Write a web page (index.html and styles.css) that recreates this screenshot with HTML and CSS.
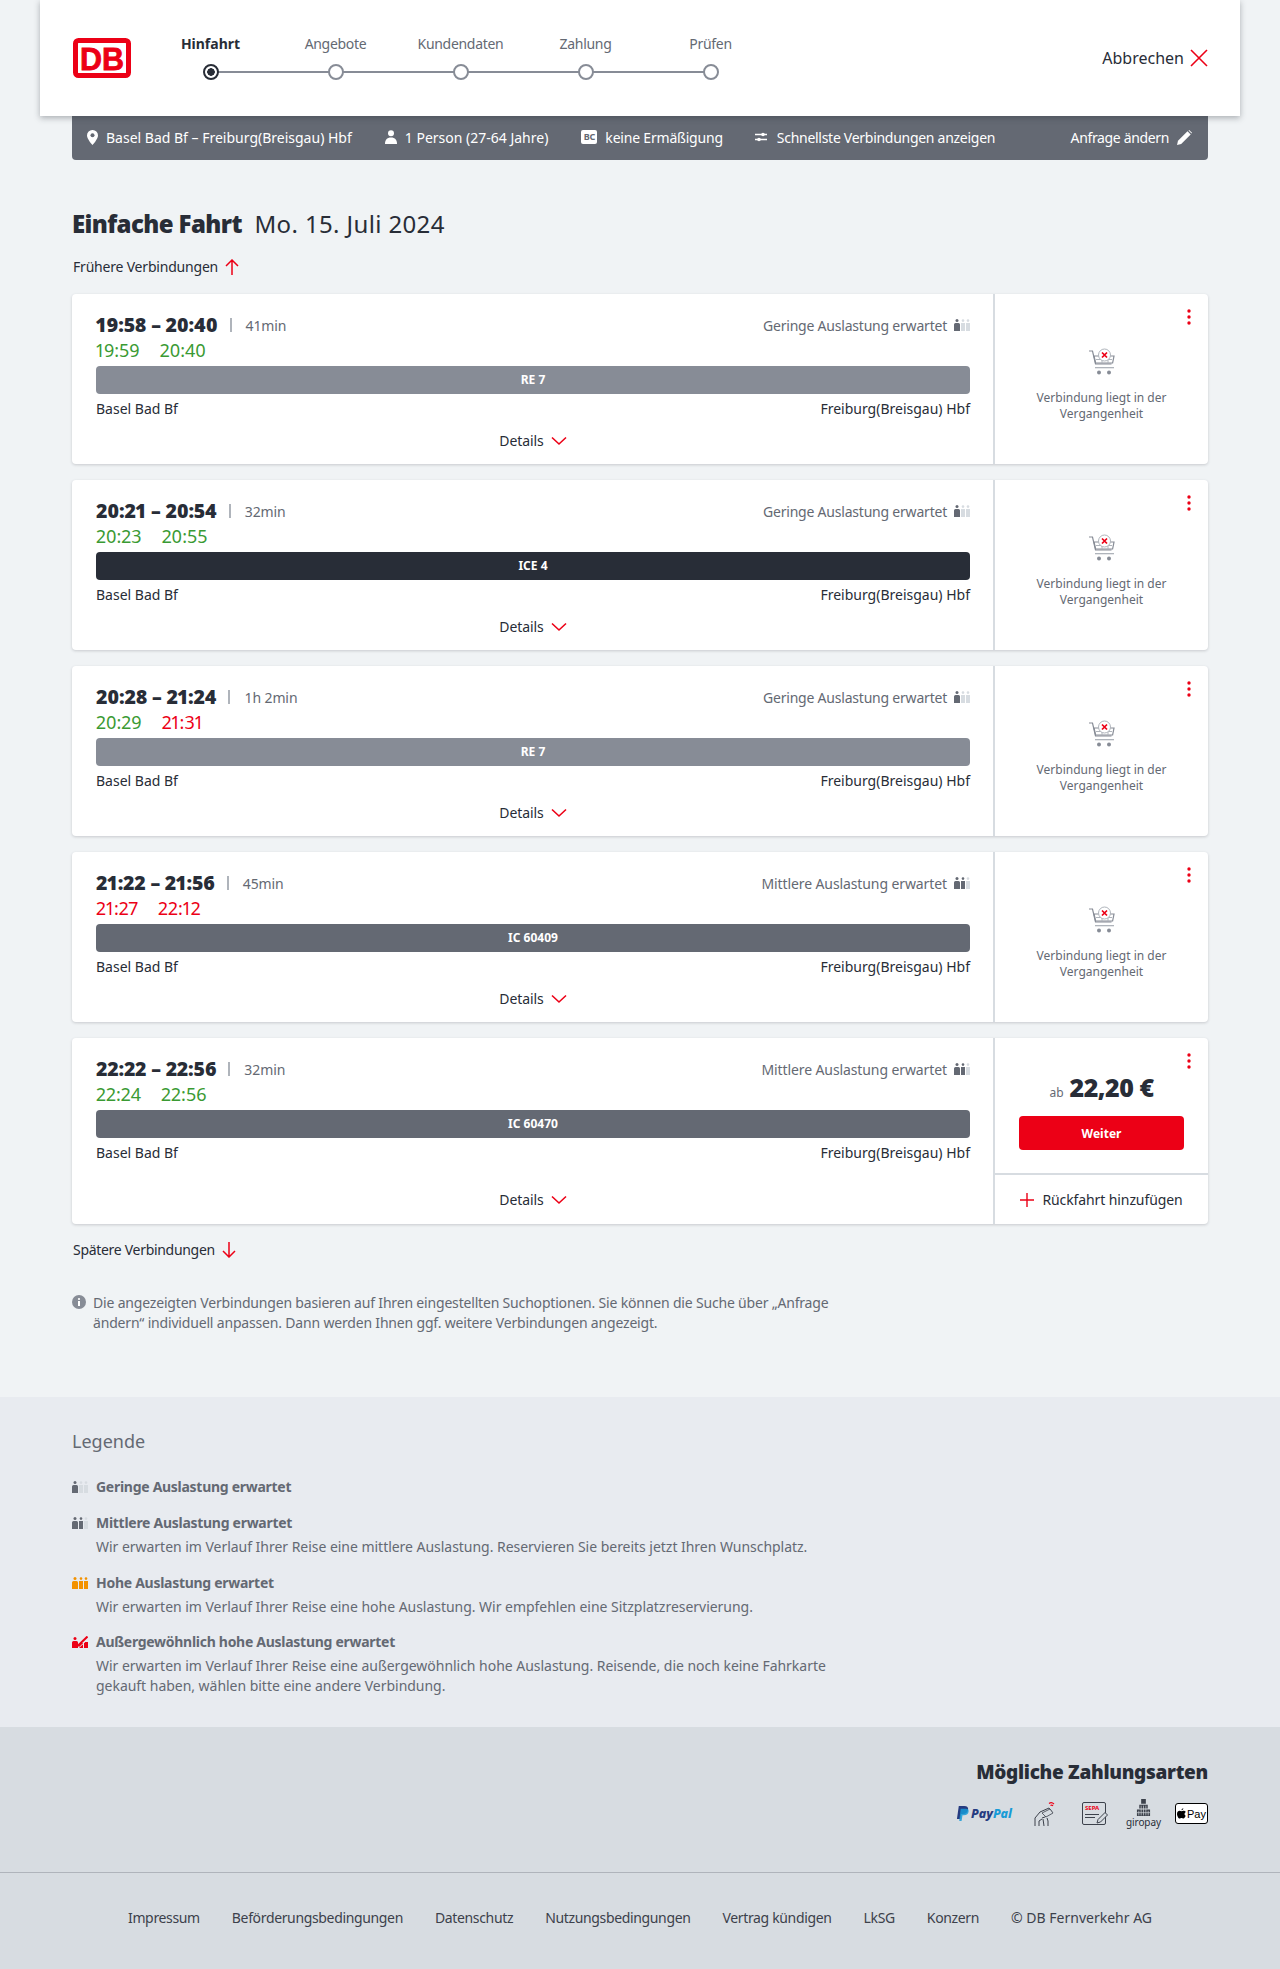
FILE: index.html
```html
<!DOCTYPE html>
<html lang="de">
<head>
    <meta charset="UTF-8">
    <meta name="viewport" content="width=device-width, initial-scale=1.0">
    <title>Angebotsauswahl</title>
    <link rel="stylesheet" href="styles.css">
</head>
<body>
    <!-- Shared icons -->
    <svg class="icon-defs" aria-hidden="true">
        <symbol id="i-chevron" viewBox="0 0 16 10"><path d="M1 1.500l7 6.500 7-6.500" fill="none" stroke="#ec0016" stroke-width="1.600"/></symbol>
        <symbol id="i-dots" viewBox="0 0 4 16"><circle cx="2" cy="2" r="1.700" fill="#ec0016"/><circle cx="2" cy="8" r="1.700" fill="#ec0016"/><circle cx="2" cy="14" r="1.700" fill="#ec0016"/></symbol>
        <symbol id="i-load-low" viewBox="0 0 16 12"><circle cx="3" cy="1.600" r="1.500" fill="#646973"/><path d="M0 5.500a1.500 1.500 0 0 1 1.500-1.500h3A1.500 1.500 0 0 1 6 5.500V12H0z" fill="#646973"/><circle cx="9" cy="1.600" r="1.300" fill="#d7dce1"/><rect x="7" y="4" width="4" height="8" fill="#d7dce1"/><circle cx="14" cy="1.600" r="1.300" fill="#d7dce1"/><rect x="12" y="4" width="4" height="8" fill="#d7dce1"/></symbol>
        <symbol id="i-load-mid" viewBox="0 0 16 12"><circle cx="3" cy="1.600" r="1.500" fill="#646973"/><path d="M0 5.500a1.500 1.500 0 0 1 1.500-1.500h3A1.500 1.500 0 0 1 6 5.500V12H0z" fill="#646973"/><circle cx="9" cy="1.600" r="1.300" fill="#646973"/><rect x="7" y="4" width="4" height="8" fill="#646973"/><circle cx="14" cy="1.600" r="1.300" fill="#d7dce1"/><rect x="12" y="4" width="4" height="8" fill="#d7dce1"/></symbol>
        <symbol id="i-load-high" viewBox="0 0 16 12"><g fill="#f39200"><circle cx="3" cy="1.600" r="1.500"/><path d="M0 5.500a1.500 1.500 0 0 1 1.500-1.500h3A1.500 1.500 0 0 1 6 5.500V12H0z"/><circle cx="9" cy="1.600" r="1.300"/><rect x="7" y="4" width="4" height="8"/><circle cx="14" cy="1.600" r="1.300"/><rect x="12" y="4" width="4" height="8"/></g></symbol>
        <symbol id="i-load-max" viewBox="0 0 16 12"><g fill="#ec0016"><circle cx="3" cy="2.600" r="1.500"/><path d="M0 6.500a1.500 1.500 0 0 1 1.500-1.500h3A1.500 1.500 0 0 1 6 6.500V12H0z"/><rect x="7" y="7" width="4" height="5"/><rect x="12" y="6" width="4" height="6"/></g><path d="M3 12.500L15.500 0.500" stroke="#ec0016" stroke-width="2"/><path d="M6.500 12L16 3" stroke="#e8ebf0" stroke-width="1"/></symbol>
        <symbol id="i-cart" viewBox="0 0 28 28">
            <path d="M1 3h3.500l3 13h16" fill="none" stroke="#878c96" stroke-width="1.200"/>
            <path d="M6 8h20l-1.400 7H7.600z" fill="none" stroke="#878c96" stroke-width="1.200"/>
            <path d="M8 11.500h16M14 8v7M20 8v7" stroke="#afb4bb" stroke-width="1"/>
            <rect x="7" y="19" width="19" height="1.300" fill="#afb4bb"/>
            <circle cx="11" cy="24.500" r="2" fill="#878c96"/><circle cx="21" cy="24.500" r="2" fill="#878c96"/>
            <circle cx="16.500" cy="7" r="6" fill="#fff" stroke="#afb4bb" stroke-width="1"/>
            <path d="M14 4.500l5 5M19 4.500l-5 5" stroke="#ec0016" stroke-width="1.700"/>
        </symbol>
    </svg>

    <header class="top-header">
        <svg class="db-logo" viewBox="0 0 58 40" role="img" aria-label="DB">
            <rect x="2.500" y="2.500" width="53" height="35" rx="3" fill="#fff" stroke="#ec0016" stroke-width="5"/>
            <text x="7" y="31.500" font-size="32" textLength="44" lengthAdjust="spacingAndGlyphs" class="db-logo-text">DB</text>
        </svg>
        <ol class="stepper">
            <li class="step step-active"><span class="step-label">Hinfahrt</span><span class="step-dot"></span></li>
            <li class="step"><span class="step-label">Angebote</span><span class="step-dot"></span></li>
            <li class="step"><span class="step-label">Kundendaten</span><span class="step-dot"></span></li>
            <li class="step"><span class="step-label">Zahlung</span><span class="step-dot"></span></li>
            <li class="step"><span class="step-label">Prüfen</span><span class="step-dot"></span></li>
        </ol>
        <a class="cancel-link">Abbrechen
            <svg width="18" height="18" viewBox="0 0 18 18"><path d="M1 1l16 16M17 1L1 17" stroke="#ec0016" stroke-width="1.600"/></svg>
        </a>
    </header>

    <main class="page-width">
        <div class="summary-bar">
            <span class="summary-item summary-route">
                <svg width="11" height="15" viewBox="0 0 11 15"><path d="M5.500 0A5.400 5.400 0 0 0 0 5.400C0 9 5.500 15 5.500 15S11 9 11 5.400A5.400 5.400 0 0 0 5.500 0z" fill="#fff"/><circle cx="5.500" cy="5.200" r="2" fill="#646973"/></svg>
                Basel Bad Bf – Freiburg(Breisgau) Hbf
            </span>
            <span class="summary-item summary-person">
                <svg width="12" height="14" viewBox="0 0 12 14"><circle cx="6" cy="3.200" r="3" fill="#fff"/><path d="M0 14c0-4 1.800-6.500 6-6.500S12 10 12 14z" fill="#fff"/></svg>
                1 Person (27-64 Jahre)
            </span>
            <span class="summary-item summary-card">
                <span class="bc-badge">BC</span>
                keine Ermäßigung
            </span>
            <span class="summary-item summary-filter">
                <svg width="12" height="10" viewBox="0 0 12 10"><path d="M0 2.500h12M0 7.500h12" stroke="#fff" stroke-width="1.400"/><circle cx="8" cy="2.500" r="1.800" fill="#fff"/><circle cx="4" cy="7.500" r="1.800" fill="#fff"/></svg>
                Schnellste Verbindungen anzeigen
            </span>
            <a class="summary-edit">Anfrage ändern
                <svg width="15" height="15" viewBox="0 0 15 15"><path d="M0 15l1-4.200L10.500 1.300l3.200 3.200L4.200 14z" fill="#fff"/><path d="M11.500.4l.7-.4 2.800 2.800-.5.700z" fill="#fff"/></svg>
            </a>
        </div>

        <h1 class="page-title"><strong>Einfache Fahrt</strong> Mo. 15. Juli 2024</h1>

        <a class="more-link more-earlier">Frühere Verbindungen
            <svg width="14" height="16" viewBox="0 0 14 16"><path d="M7 16V1M1 7l6-6 6 6" fill="none" stroke="#ec0016" stroke-width="1.500"/></svg>
        </a>

        <section class="connections">
            <article class="card">
                <div class="card-main">
                    <div class="time-row">
                        <span class="time-plan">19:58 – 20:40</span>
                        <span class="time-sep"></span>
                        <span class="duration">41min</span>
                        <span class="load">Geringe Auslastung erwartet <svg class="load-icon"><use href="#i-load-low"/></svg></span>
                    </div>
                    <div class="time-real"><span class="on-time">19:59</span><span class="on-time">20:40</span></div>
                    <div class="train-bar train-re">RE 7</div>
                    <div class="stations"><span>Basel Bad Bf</span><span>Freiburg(Breisgau) Hbf</span></div>
                    <a class="details">Details <svg class="chevron"><use href="#i-chevron"/></svg></a>
                </div>
                <div class="card-side">
                    <svg class="dots"><use href="#i-dots"/></svg>
                    <svg class="cart"><use href="#i-cart"/></svg>
                    <p class="past-note">Verbindung liegt in der Vergangenheit</p>
                </div>
            </article>

            <article class="card">
                <div class="card-main">
                    <div class="time-row">
                        <span class="time-plan">20:21 – 20:54</span>
                        <span class="time-sep"></span>
                        <span class="duration">32min</span>
                        <span class="load">Geringe Auslastung erwartet <svg class="load-icon"><use href="#i-load-low"/></svg></span>
                    </div>
                    <div class="time-real"><span class="on-time">20:23</span><span class="on-time">20:55</span></div>
                    <div class="train-bar train-ice">ICE 4</div>
                    <div class="stations"><span>Basel Bad Bf</span><span>Freiburg(Breisgau) Hbf</span></div>
                    <a class="details">Details <svg class="chevron"><use href="#i-chevron"/></svg></a>
                </div>
                <div class="card-side">
                    <svg class="dots"><use href="#i-dots"/></svg>
                    <svg class="cart"><use href="#i-cart"/></svg>
                    <p class="past-note">Verbindung liegt in der Vergangenheit</p>
                </div>
            </article>

            <article class="card">
                <div class="card-main">
                    <div class="time-row">
                        <span class="time-plan">20:28 – 21:24</span>
                        <span class="time-sep"></span>
                        <span class="duration">1h 2min</span>
                        <span class="load">Geringe Auslastung erwartet <svg class="load-icon"><use href="#i-load-low"/></svg></span>
                    </div>
                    <div class="time-real"><span class="on-time">20:29</span><span class="late">21:31</span></div>
                    <div class="train-bar train-re">RE 7</div>
                    <div class="stations"><span>Basel Bad Bf</span><span>Freiburg(Breisgau) Hbf</span></div>
                    <a class="details">Details <svg class="chevron"><use href="#i-chevron"/></svg></a>
                </div>
                <div class="card-side">
                    <svg class="dots"><use href="#i-dots"/></svg>
                    <svg class="cart"><use href="#i-cart"/></svg>
                    <p class="past-note">Verbindung liegt in der Vergangenheit</p>
                </div>
            </article>

            <article class="card">
                <div class="card-main">
                    <div class="time-row">
                        <span class="time-plan">21:22 – 21:56</span>
                        <span class="time-sep"></span>
                        <span class="duration">45min</span>
                        <span class="load load-mid">Mittlere Auslastung erwartet <svg class="load-icon"><use href="#i-load-mid"/></svg></span>
                    </div>
                    <div class="time-real"><span class="late">21:27</span><span class="late">22:12</span></div>
                    <div class="train-bar train-ic">IC 60409</div>
                    <div class="stations"><span>Basel Bad Bf</span><span>Freiburg(Breisgau) Hbf</span></div>
                    <a class="details">Details <svg class="chevron"><use href="#i-chevron"/></svg></a>
                </div>
                <div class="card-side">
                    <svg class="dots"><use href="#i-dots"/></svg>
                    <svg class="cart"><use href="#i-cart"/></svg>
                    <p class="past-note">Verbindung liegt in der Vergangenheit</p>
                </div>
            </article>

            <article class="card card-bookable">
                <div class="card-main">
                    <div class="time-row">
                        <span class="time-plan">22:22 – 22:56</span>
                        <span class="time-sep"></span>
                        <span class="duration">32min</span>
                        <span class="load load-mid">Mittlere Auslastung erwartet <svg class="load-icon"><use href="#i-load-mid"/></svg></span>
                    </div>
                    <div class="time-real"><span class="on-time">22:24</span><span class="on-time">22:56</span></div>
                    <div class="train-bar train-ic">IC 60470</div>
                    <div class="stations"><span>Basel Bad Bf</span><span>Freiburg(Breisgau) Hbf</span></div>
                    <a class="details">Details <svg class="chevron"><use href="#i-chevron"/></svg></a>
                </div>
                <div class="card-side side-offer">
                    <svg class="dots"><use href="#i-dots"/></svg>
                    <div class="offer">
                        <div class="price"><small>ab</small> 22,20 €</div>
                        <button class="next-btn">Weiter</button>
                    </div>
                    <a class="return-link">
                        <svg width="14" height="14" viewBox="0 0 14 14"><path d="M7 0v14M0 7h14" stroke="#ec0016" stroke-width="1.400"/></svg>
                        Rückfahrt hinzufügen
                    </a>
                </div>
            </article>
        </section>

        <a class="more-link more-later">Spätere Verbindungen
            <svg width="14" height="16" viewBox="0 0 14 16"><path d="M7 0v15M1 9l6 6 6-6" fill="none" stroke="#ec0016" stroke-width="1.500"/></svg>
        </a>

        <div class="search-note">
            <svg width="14" height="14" viewBox="0 0 14 14"><circle cx="7" cy="7" r="7" fill="#878c96"/><rect x="6" y="6" width="2" height="5" fill="#fff"/><circle cx="7" cy="4" r="1.100" fill="#fff"/></svg>
            <p>Die angezeigten Verbindungen basieren auf Ihren eingestellten Suchoptionen. Sie können die Suche über „Anfrage ändern“ individuell anpassen. Dann werden Ihnen ggf. weitere Verbindungen angezeigt.</p>
        </div>
    </main>

    <!-- Legend -->
    <section class="legend">
        <div class="page-width">
            <h2 class="legend-title">Legende</h2>
            <div class="legend-item legend-first">
                <svg class="legend-icon"><use href="#i-load-low"/></svg>
                <div><h3>Geringe Auslastung erwartet</h3></div>
            </div>
            <div class="legend-item">
                <svg class="legend-icon"><use href="#i-load-mid"/></svg>
                <div><h3>Mittlere Auslastung erwartet</h3>
                <p>Wir erwarten im Verlauf Ihrer Reise eine mittlere Auslastung. Reservieren Sie bereits jetzt Ihren Wunschplatz.</p></div>
            </div>
            <div class="legend-item">
                <svg class="legend-icon"><use href="#i-load-high"/></svg>
                <div><h3>Hohe Auslastung erwartet</h3>
                <p>Wir erwarten im Verlauf Ihrer Reise eine hohe Auslastung. Wir empfehlen eine Sitzplatzreservierung.</p></div>
            </div>
            <div class="legend-item legend-last">
                <svg class="legend-icon"><use href="#i-load-max"/></svg>
                <div><h3>Außergewöhnlich hohe Auslastung erwartet</h3>
                <p>Wir erwarten im Verlauf Ihrer Reise eine außergewöhnlich hohe Auslastung. Reisende, die noch keine Fahrkarte gekauft haben, wählen bitte eine andere Verbindung.</p></div>
            </div>
        </div>
    </section>

    <!-- Payment methods -->
    <section class="payments">
        <div class="page-width payments-inner">
            <h2>Mögliche Zahlungsarten</h2>
            <div class="pay-icons">
                <span class="pay-paypal">
                    <svg width="13" height="15" viewBox="0 0 14 16"><path d="M3 0h6c3 0 4.500 1.500 4 4-.5 3-2.500 4.500-5.500 4.500H5.500L4.500 14H1z" fill="#253b80"/><path d="M5 3h5.500c2.500 0 3.500 1 3 3.500-.5 2.500-2.500 3.500-5 3.500H7l-1 6H3.500z" fill="#179bd7" opacity=".85"/></svg>
                    <span class="pay-word"><b>Pay</b><i>Pal</i></span>
                </span>
                <svg class="pay-hand" width="24" height="26" viewBox="0 0 22 26"><path d="M1 25v-8l5-6 9-4 3 4-7 5-3 1M5 25v-5l3-2M13 17l1 3v5M10 25l-1-7" fill="none" stroke="#3c414b" stroke-width="1"/><path d="M8 12l8-4 3 4-7 4z" fill="#d7dce1" stroke="#3c414b" stroke-width=".8"/><path d="M15 2.500c1.500-1.200 3.500-1 5 .5M16.500 4.500c.8-.6 1.800-.5 2.500.3" fill="none" stroke="#ec0016" stroke-width="1.100"/></svg>
                <span class="pay-sepa">
                    <span class="sepa-word">SEPA</span>
                    <span class="sepa-line"></span>
                    <span class="sepa-line short"></span>
                    <svg class="sepa-pen" width="13" height="13" viewBox="0 0 13 13"><path d="M1 12l1-3.500 7-7 2.500 2.500-7 7z" fill="#d7dce1" stroke="#3c414b" stroke-width="1"/></svg>
                </span>
                <span class="pay-giro">
                    <svg width="15" height="17" viewBox="0 0 16 18"><path d="M5.500 0h5v5h-5zM3.500 6h9v4h-9zM1 11h14v7H1z" fill="#3c414b"/><path d="M3 12.500v5M5.500 7v10.500M8 7v10.500M10.500 7v10.500M13 12.500v5M1 14.500h14" stroke="#d7dce1" stroke-width=".7"/></svg>
                    <span class="giro-word">giropay</span>
                </span>
                <span class="pay-apple">
                    <svg width="9" height="11" viewBox="0 0 10 12"><path d="M7 .2c.1 1-.8 2.200-2 2.200C4.900 1.300 6 .3 7 .2zM9.600 8.400c-.5 1.200-1.400 3.200-2.600 3.200-.8 0-1-.5-2-.5s-1.200.5-2 .5C1.600 11.600 0 8.800 0 6.500 0 4.200 1.500 3 2.900 3c.9 0 1.600.6 2.100.6.500 0 1.300-.7 2.400-.6.500 0 1.800.2 2.300 1.400-1.900 1.100-1.600 3.400-.1 4z" fill="#000"/></svg>
                    <span>Pay</span>
                </span>
            </div>
        </div>
    </section>

    <footer class="site-footer">
        <a>Impressum</a>
        <a>Beförderungsbedingungen</a>
        <a>Datenschutz</a>
        <a>Nutzungsbedingungen</a>
        <a>Vertrag kündigen</a>
        <a>LkSG</a>
        <a>Konzern</a>
        <a class="footer-copy">© DB Fernverkehr AG</a>
    </footer>
</body>
</html>
```

FILE: styles.css
```css
* {
    box-sizing: border-box;
}

body {
    margin: 0;
    background: #f0f3f5;
    color: #282d37;
    font-family: "Noto Sans", sans-serif;
    font-size: 14px;
}

p, h1, h2, h3, ol {
    margin: 0;
    padding: 0;
}

.icon-defs {
    position: absolute;
    width: 0;
    height: 0;
}

.page-width {
    width: 1136px;
    margin: 0 auto;
}

/* Header */
.top-header {
    position: relative;
    z-index: 2;
    display: flex;
    align-items: center;
    width: 1200px;
    height: 116px;
    margin: 0 auto;
    padding: 0 32px 0 33px;
    background: #fff;
    box-shadow: 0 2px 6px rgba(40, 45, 55, 0.35);
}

.db-logo {
    flex: none;
    width: 58px;
    height: 40px;
}

.db-logo-text {
    fill: #ec0016;
    stroke: #ec0016;
    stroke-width: 0.8;
    font-family: "Liberation Sans", sans-serif;
    font-weight: bold;
}

.stepper {
    display: flex;
    list-style: none;
    margin-left: 17px;
}

.step {
    position: relative;
    display: flex;
    flex-direction: column;
    align-items: center;
    width: 125px;
    height: 50px;
}

.step-label {
    margin-top: 1px;
    color: #646973;
    font-size: 14px;
    letter-spacing: -0.3px;
    line-height: 20px;
}

.step-active .step-label {
    color: #282d37;
    font-weight: 700;
    letter-spacing: 0;
}

.step-dot {
    position: relative;
    z-index: 1;
    width: 16px;
    height: 16px;
    margin-top: 10px;
    border: 2px solid #878c96;
    border-radius: 50%;
    background: #fff;
}

.step-active .step-dot {
    border-color: #282d37;
    background: radial-gradient(circle, #282d37 0 3.5px, #fff 4px);
}

.step:not(:last-child)::after {
    content: "";
    position: absolute;
    left: 50%;
    top: 38px;
    width: 125px;
    height: 2px;
    background: #878c96;
}

.cancel-link {
    display: flex;
    align-items: center;
    gap: 6px;
    margin-left: auto;
    font-size: 16px;
    line-height: 20px;
}

/* Search summary */
.summary-bar {
    display: flex;
    align-items: center;
    height: 44px;
    padding: 0 0 2px 15px;
    background: #646973;
    border-radius: 0 0 4px 4px;
    color: #fff;
    font-size: 14px;
}

.summary-item {
    display: flex;
    align-items: center;
    gap: 8px;
}

.summary-person {
    margin-left: 33px;
}

.summary-card {
    margin-left: 33px;
    letter-spacing: -0.2px;
}

.summary-filter {
    gap: 10px;
    margin-left: 32px;
    letter-spacing: -0.28px;
}

.bc-badge {
    width: 16px;
    height: 14px;
    border-radius: 2px;
    background: #fff;
    color: #646973;
    font-size: 9px;
    font-weight: 700;
    line-height: 14px;
    text-align: center;
}

.summary-edit {
    display: flex;
    align-items: center;
    gap: 8px;
    margin-left: auto;
    padding-right: 16px;
    letter-spacing: -0.35px;
}

/* Title */
.page-title {
    margin-top: 48px;
    font-size: 24px;
    font-weight: 400;
    letter-spacing: 0.37px;
    line-height: 32px;
}

.page-title strong {
    margin-right: 6px;
    font-weight: 900;
    letter-spacing: -0.6px;
}

.more-link {
    display: flex;
    align-items: center;
    gap: 7px;
    margin-left: 1px;
    font-size: 14px;
    letter-spacing: -0.2px;
    line-height: 20px;
}

.more-earlier {
    margin-top: 17px;
}

.more-later {
    margin-top: 16px;
    letter-spacing: -0.3px;
}

/* Connection cards */
.connections {
    display: flex;
    flex-direction: column;
    gap: 16px;
    margin-top: 17px;
}

.card {
    display: flex;
    height: 170px;
    background: #fff;
    border-radius: 4px;
    box-shadow: 0 1px 3px rgba(40, 45, 55, 0.2);
}

.card-bookable {
    height: 186px;
}

.card-main {
    display: flex;
    flex-direction: column;
    width: 923px;
    padding: 19px 23px 0 24px;
    border-right: 2px solid #d7dce1;
}

.time-row {
    display: flex;
    align-items: center;
    height: 24px;
    margin-bottom: 1px;
}

.time-plan {
    font-size: 19.5px;
    font-variant-numeric: proportional-nums;
    font-weight: 900;
    letter-spacing: -0.2px;
    line-height: 24px;
}

.time-sep {
    width: 2px;
    height: 14px;
    margin: 0 14px 0 12px;
    background: #afb4bb;
}

.duration {
    color: #646973;
    font-size: 14px;
    letter-spacing: -0.1px;
}

.load {
    display: flex;
    align-items: center;
    gap: 7px;
    margin-left: auto;
    color: #646973;
    font-size: 14px;
    letter-spacing: -0.21px;
}

.load-mid {
    letter-spacing: -0.1px;
}

.load-icon {
    width: 16px;
    height: 12px;
}

.time-real {
    display: flex;
    gap: 20px;
    height: 24px;
    margin-bottom: 4px;
    font-size: 18px;
    font-variant-numeric: proportional-nums;
    line-height: 24px;
}

.on-time {
    color: #3a9a33;
}

.late {
    color: #ec0016;
}

.train-bar {
    height: 28px;
    border-radius: 4px;
    color: #fff;
    font-size: 12px;
    font-weight: 700;
    line-height: 28px;
    text-align: center;
}

.train-re {
    background: #878c96;
}

.train-ice {
    background: #282d37;
}

.train-ic {
    background: #646973;
}

.stations {
    display: flex;
    justify-content: space-between;
    margin-top: 5px;
    font-size: 14px;
    line-height: 19px;
}

.details {
    display: flex;
    align-items: center;
    justify-content: center;
    gap: 7px;
    margin-top: auto;
    padding-bottom: 13px;
    font-size: 14px;
    letter-spacing: -0.1px;
    line-height: 20px;
}

.card-bookable .details {
    padding-bottom: 14px;
}

.chevron {
    width: 16px;
    height: 10px;
}

.card-side {
    position: relative;
    display: flex;
    flex-direction: column;
    align-items: center;
    flex: 1;
    padding-top: 54px;
}

.dots {
    position: absolute;
    top: 15px;
    right: 17px;
    width: 4px;
    height: 16px;
}

.cart {
    width: 28px;
    height: 28px;
}

.past-note {
    width: 150px;
    margin-top: 14px;
    color: #646973;
    font-size: 12px;
    line-height: 16px;
    text-align: center;
}

.side-offer {
    padding-top: 0;
}

.offer {
    display: flex;
    flex-direction: column;
    align-items: center;
    width: 100%;
    height: 137px;
    padding-top: 31px;
    border-bottom: 2px solid #d7dce1;
}

.price {
    font-size: 25px;
    font-weight: 900;
    letter-spacing: -0.5px;
    line-height: 36px;
}

.price small {
    color: #646973;
    font-size: 12px;
    font-weight: 400;
    letter-spacing: 0;
}

.next-btn {
    width: 165px;
    height: 34px;
    margin-top: 5px;
    border: none;
    border-radius: 4px;
    background: #ec0016;
    color: #fff;
    font-family: inherit;
    font-size: 12px;
    font-weight: 700;
}

.return-link {
    display: flex;
    align-items: center;
    gap: 8px;
    height: 49px;
    letter-spacing: -0.1px;
}

/* Note under list */
.search-note {
    display: flex;
    gap: 7px;
    width: 780px;
    margin-top: 33px;
    color: #646973;
    letter-spacing: -0.18px;
    line-height: 20px;
}

.search-note svg {
    flex: none;
    margin-top: 2px;
}

/* Legend */
.legend {
    height: 330px;
    margin-top: 64px;
    padding-top: 31px;
    background: #e8ebf0;
    color: #646973;
}

.legend-title {
    font-size: 18px;
    font-weight: 400;
    line-height: 26px;
}

.legend-item {
    display: flex;
    gap: 8px;
    width: 800px;
    margin-top: 16px;
    letter-spacing: -0.03px;
    line-height: 20px;
}

.legend-first {
    margin-top: 23px;
}

.legend-last {
    margin-top: 15px;
}

.legend-item h3 {
    font-size: 14px;
    font-weight: 700;
    letter-spacing: -0.28px;
    line-height: 20px;
}

.legend-item p {
    margin-top: 4px;
}

.legend-icon {
    flex: none;
    width: 16px;
    height: 12px;
    margin-top: 4px;
}

/* Payments */
.payments {
    height: 146px;
    padding-top: 32px;
    background: #d7dce1;
    border-bottom: 1px solid #afb4bb;
}

.payments-inner {
    display: flex;
    flex-direction: column;
    align-items: flex-end;
}

.payments h2 {
    font-size: 19px;
    font-weight: 900;
    letter-spacing: -0.3px;
    line-height: 26px;
}

.pay-icons {
    display: flex;
    align-items: center;
    height: 33px;
    margin-top: 12px;
}

.pay-paypal {
    display: flex;
    align-items: center;
    gap: 2px;
}

.pay-word {
    color: #253b80;
    font-size: 12.5px;
    font-style: italic;
    font-weight: 800;
}

.pay-word b {
    font-weight: 800;
}

.pay-word i {
    color: #179bd7;
}

.pay-hand {
    margin-left: 21px;
}

.pay-sepa {
    position: relative;
    width: 24px;
    height: 23px;
    margin-left: 25px;
    padding: 1px 2px;
    border: 1px solid #3c414b;
    border-radius: 2px;
}

.sepa-word {
    display: block;
    color: #ec0016;
    font-size: 6px;
    font-weight: 700;
    line-height: 8px;
}

.sepa-line {
    display: block;
    width: 14px;
    height: 1px;
    margin-top: 2px;
    background: #3c414b;
}

.sepa-line.short {
    width: 10px;
}

.sepa-pen {
    position: absolute;
    right: -4px;
    bottom: 0;
}

.pay-giro {
    display: flex;
    flex-direction: column;
    align-items: center;
    width: 33px;
    margin-left: 21px;
}

.giro-word {
    color: #282d37;
    font-size: 10px;
    letter-spacing: -0.1px;
    line-height: 13px;
}

.pay-apple {
    display: flex;
    align-items: center;
    justify-content: center;
    gap: 1px;
    width: 33px;
    height: 21px;
    margin-left: 15px;
    background: #fff;
    border: 1px solid #000;
    border-radius: 3px;
    color: #000;
    font-family: "Liberation Sans", sans-serif;
    font-size: 11px;
}

/* Footer */
.site-footer {
    display: flex;
    justify-content: center;
    gap: 32px;
    height: 96px;
    padding-top: 35px;
    background: #d7dce1;
    color: #3c414b;
    font-size: 14px;
    letter-spacing: -0.35px;
    line-height: 20px;
}

.footer-copy {
    letter-spacing: 0;
}
```
